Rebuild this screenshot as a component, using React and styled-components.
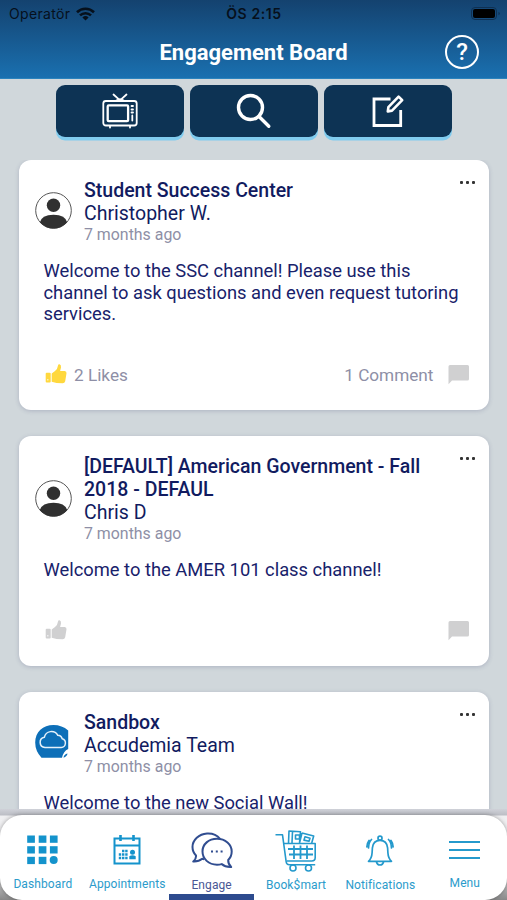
import * as React from 'react'
import styled, { createGlobalStyle } from 'styled-components'

const GlobalStyle = createGlobalStyle`
    * {
        box-sizing: border-box;
    }
    body {
        margin: 0;
        background: #d0d7db;
        font-family: Roboto, "Liberation Sans", sans-serif;
    }
    svg {
        display: block;
        flex-shrink: 0;
    }
`

const Screen = styled.div`
    width: 507px;
    height: 900px;
    display: flex;
    flex-direction: column;
    overflow: hidden;
    background: #d0d7db;
`

const Header = styled.header`
    height: 79px;
    flex-shrink: 0;
    background: linear-gradient(#14426f, #1a70b0);
    border-bottom: 1px solid #2b83bd;
`

const StatusBar = styled.div`
    display: grid;
    grid-template-columns: 1fr auto 1fr;
    align-items: center;
    height: 27px;
    padding: 0 6px 0 9px;
    color: #06101c;
    font-family: Inter, "Liberation Sans", sans-serif;
    font-size: 14px;
`

const Carrier = styled.div`
    display: flex;
    align-items: center;
    gap: 6px;
    letter-spacing: 0.35px;
`

const Clock = styled.div`
    font-weight: 600;
    letter-spacing: 0.6px;
    margin-right: 2px;
`

const Battery = styled.div`
    justify-self: end;
`

const TitleBar = styled.div`
    display: grid;
    grid-template-columns: 1fr auto 1fr;
    align-items: center;
    height: 50px;
    padding: 0 28px;
`

const Title = styled.h1`
    grid-column: 2;
    margin: 0;
    color: #fff;
    font-size: 22px;
    font-weight: 700;
`

const HelpButton = styled.button`
    justify-self: end;
    width: 34px;
    height: 34px;
    padding: 0;
    border: 2px solid #fff;
    border-radius: 50%;
    background: none;
    color: #fff;
    font-family: Roboto, sans-serif;
    font-size: 24px;
    font-weight: 500;
    line-height: 30px;
`

const Toolbar = styled.div`
    display: flex;
    justify-content: center;
    gap: 6px;
    padding: 6px 0 20px;
    flex-shrink: 0;
`

const ToolButton = styled.button`
    display: flex;
    align-items: center;
    justify-content: center;
    width: 128px;
    height: 52px;
    padding: 0;
    border: 0;
    border-radius: 9px;
    background: #0d3354;
    box-shadow: 0 3.5px 0 #80ccef;
    color: #fff;
    margin-bottom: 3px;
`

const Feed = styled.main`
    flex: 1;
    min-height: 0;
    overflow: hidden;
    padding: 0 18px 0 19px;
`

const Card = styled.article`
    height: ${props => props.$height}px;
    margin-bottom: 26px;
    padding: 19px 16px 0;
    border-radius: 12px;
    background: #fff;
    box-shadow: 0 1px 4px rgba(70, 75, 120, 0.25);
    display: flex;
    flex-direction: column;
`

const CardHead = styled.div`
    display: flex;
    align-items: center;
    gap: 12px;
`

const Avatar = styled.div`
    margin-bottom: 3px;
`

const Heading = styled.div`
    flex: 1;
    color: #111b60;
    font-size: 19.5px;
    line-height: 23px;
`

const Channel = styled.div`
    font-weight: 500;
    max-width: 345px;
`

const Time = styled.div`
    color: #8e8fa6;
    font-size: 15.9px;
    line-height: 20px;
`

const MoreButton = styled.button`
    display: flex;
    gap: 2.6px;
    align-self: flex-start;
    margin: 2px -2px 0 0;
    padding: 0;
    border: 0;
    background: none;
`

const Dot = styled.span`
    width: 3.2px;
    height: 3.2px;
    border-radius: 1px;
    background: #333;
`

const Message = styled.p`
    flex: 1;
    margin: 15px 0 0 8.5px;
    color: #18226b;
    font-size: 18.35px;
    line-height: 21.7px;
`

const CardFoot = styled.div`
    display: flex;
    justify-content: space-between;
    height: 28px;
    margin-bottom: 21px;
    padding: 0 3.5px 0 10px;
    color: #8e8fa6;
    font-size: 17.2px;
`

const Counter = styled.div`
    display: flex;
    align-items: center;
    gap: ${props => props.$gap}px;
`

const TabBarWrap = styled.footer`
    flex-shrink: 0;
    padding-top: 6px;
    background: linear-gradient(#cfd1d8, #bcbec5 6px, #efeff1 7px, #f1f1f3 60px, #888 91px);
`

const TabBar = styled.nav`
    display: grid;
    grid-template-columns: repeat(6, 84.4px);
    justify-content: end;
    height: 85px;
    border-radius: 22px;
    background: #fff;
    box-shadow: 0 0 4px rgba(0, 0, 0, 0.35);
`

const Tab = styled.a`
    display: flex;
    flex-direction: column;
    align-items: center;
    color: ${props => props.$active ? '#4a5795' : '#2b9bcb'};
    font-size: 12px;
    line-height: 16px;
    border-bottom: ${props => props.$active ? '6px solid #2d4b8e' : '0'};
`

const TabIcon = styled.div`
    height: ${props => props.$height}px;
    display: flex;
    align-items: center;
    padding-top: 9px;
`

const TabLabel = styled.span`
    letter-spacing: 0.1px;
    white-space: nowrap;
`

const WifiIcon = () => (
    <svg width="19" height="14" viewBox="0 0 19 14" fill="none" stroke="#06101c" strokeWidth="2.6">
        <path d="M1 5.2a12.2 12.2 0 0 1 17 0" />
        <path d="M4 8.4a8 8 0 0 1 11 0" />
        <path d="M9.5 13.6 6.4 10.5a4.5 4.5 0 0 1 6.2 0z" fill="#06101c" stroke="none" />
    </svg>
)

const BatteryIcon = () => (
    <svg width="30" height="13" viewBox="0 0 30 13">
        <rect x="0.5" y="0.5" width="25" height="12" rx="3.5" fill="none" stroke="#0f3052" />
        <rect x="2" y="2" width="22" height="9" rx="2" fill="#000" />
        <path d="M27.5 4.7v3.6q1.3-.5 1.3-1.8t-1.3-1.8z" fill="#0f3052" />
    </svg>
)

const TvIcon = () => (
    <svg width="36" height="36" viewBox="0 0 36 36" fill="none" stroke="#fff" strokeWidth="1.8" strokeLinecap="round">
        <path d="M11.5 1.5 18 7.3l6.5-5.8M14.5 7.5q3.5-2.8 7 0" />
        <rect x="1.3" y="8" width="33.4" height="24.5" rx="2.5" />
        <rect x="5.7" y="12.4" width="20.4" height="15.8" rx="1" strokeWidth="2.3" />
        <path d="M29.5 13h1.500M29.5 16.5h1.500M29.5 19.5h1.500M30.3 22.5v5M8 33v1.6M28 33v1.6" />
    </svg>
)

const SearchIcon = () => (
    <svg width="36" height="36" viewBox="0 0 36 36" fill="none" stroke="#fff" strokeWidth="3.4" strokeLinecap="round">
        <circle cx="14.5" cy="14.5" r="12" />
        <path d="m23 23.500 9.800 9.800" />
    </svg>
)

const ComposeIcon = () => (
    <svg width="34" height="34" viewBox="0 0 34 34" fill="none" stroke="#fff" strokeWidth="2.8">
        <path d="M19.5 5H3v26.500h26.700V16" />
        <path d="m16.8 17.400.6-4.300L27.600 2.600l3.600 3.600L21 16.600z" strokeWidth="2.600" strokeLinejoin="round" />
    </svg>
)

const PersonAvatar = () => (
    <svg width="37" height="37" viewBox="0 0 37 37">
        <clipPath id="avatar">
            <circle cx="18.5" cy="18.5" r="18" />
        </clipPath>
        <circle cx="18.5" cy="18.5" r="17.8" fill="#fff" stroke="#555" strokeWidth="1" />
        <circle cx="18.5" cy="13.2" r="6.7" fill="#303030" />
        <path d="M4.5 31q2-8.2 14-8.2T32.5 31L26 37H11z" fill="#303030" clipPath="url(#avatar)" />
    </svg>
)

const CloudAvatar = () => (
    <svg width="37" height="37" viewBox="0 0 37 37">
        <path d="M18.5 1Q27 1 33.2 6.500V25Q28.500 27 27 33.800H6.500Q.2 27 .2 18.500C.2 8 8 1 18.500 1z" fill="#0d6fb8" />
        <path d="M28.500 33.800q.5-3.500 4-4.200-.5 3-4 4.200z" fill="#0d6fb8" />
        <path d="M10 23.500a5.200 5.200 0 0 1-.6-10.300 7.200 7.200 0 0 1 13.300-2 4.900 4.900 0 0 1 4.500 3.500 4.500 4.500 0 0 1-1 8.800z" fill="none" stroke="#e6f1fa" strokeWidth="1.5" />
    </svg>
)

const LikeIcon = ({ color }) => (
    <svg width="22" height="22" viewBox="0 0 22 22" fill={color}>
        <rect x="0.7" y="8.700" width="5" height="9.800" rx="1" />
        <path d="M6.700 9.500 10 7.100q2.700-2.500 3-5.700Q13.200.1 14.500.3q1.800.5 1.500 3.200l-.9 3.600h4.600q2 .2 1.800 2.200l-1.300 8q-.5 1.900-2.600 1.900l-6-.2-4.900-1.200z" />
        <path d="M2 15h1.500v1.400H2z" fill="#fff" opacity="0.6" />
    </svg>
)

const CommentIcon = () => (
    <svg width="22" height="22" viewBox="0 0 22 22">
        <path d="M2 1h17.500q1.500 0 1.500 1.500V15q0 1.500-1.500 1.500H4L.5 20.300V2.500Q.5 1 2 1z" fill="#d0d0d1" />
    </svg>
)

const DashboardIcon = () => (
    <svg width="31" height="30" viewBox="0 0 31 30" fill="#1493cc">
        {[0, 11.5, 22.7].map(x => [0, 10.7, 21.3].map(y => (
            x > 20 && y > 20
                ? <circle key={`${x}-${y}`} cx="26.7" cy="25" r="4" />
                : <rect key={`${x}-${y}`} x={x + 0.2} y={y + 0.5} width="7.7" height="7.3" />
        )))}
    </svg>
)

const CalendarIcon = () => (
    <svg width="28" height="30" viewBox="0 0 28 30" fill="none" stroke="#1493cc" strokeWidth="2">
        <path d="M1.5 3.5h25v25h-25zM1.5 10.500h25" />
        <path d="M7.5 0v6M20.5 0v6" strokeWidth="2.6" />
        <path d="M9 16h6.400M5.800 19.500h9.600M5.800 23h9.600" strokeWidth="2.4" strokeDasharray="2.4 0.8" />
        <circle cx="19.5" cy="17.3" r="2.5" fill="#1493cc" stroke="none" />
        <path d="M16.3 24.3v-3q3.200-2.300 6.400 0v3z" fill="#1493cc" stroke="none" />
    </svg>
)

const ChatIcon = () => (
    <svg width="42" height="37" viewBox="0 0 42 37" fill="none" stroke="#304d90" strokeWidth="2" strokeLinejoin="round">
        <path d="M29 6.8C26 3 21 1.2 16 1.500 8 2 1.500 8 1.500 15c0 4 1.500 6.500 3.500 8.500.3 2.500-1 4.500-2.700 6 3.800.2 6.700-.8 8.900-2.700l2 .6" />
        <path d="M26 6.8c8.300 0 14.700 5.500 14.700 12.700 0 3.500-1.500 6.500-3.500 8.500-.2 3 .8 5 3 7-4 .2-7.200-.8-9.500-2.900-1.500.4-3 .6-4.700.6-8.300 0-14.500-5.800-14.500-13.200S17.700 6.800 26 6.800z" fill="#fff" />
        <path d="M20 19.500h2M24.800 19.500h2M29.600 19.500h2" />
    </svg>
)

const CartIcon = () => (
    <svg width="42" height="42" viewBox="0 0 42 42" fill="none" stroke="#2499cc" strokeWidth="1.6" strokeLinejoin="round">
        <path d="M.5 4.800h7L11.200 32q.4 2.700 3 2.700h26" />
        <path d="M8.700 13.500h31.500v14q0 3.500-3.500 3.500h-25" />
        <path d="m13.500 13 .5-12 11.500.8L24.500 13M17 13l.5-11.500M27 3l11.700 3-2 7M27 3l-2.500 10M20.500 5h4v4h-4z" />
        <path d="m30 6.800 5 1.500-1 3-5-1.200z" />
        <path d="M13 19h25M14 24.500h24M19 15.500V29M25.500 15.500V29M32 15.500V29" strokeWidth="1.8" />
        <circle cx="18" cy="38" r="3" />
        <circle cx="33.5" cy="38" r="3" />
    </svg>
)

const BellIcon = () => (
    <svg width="28" height="31" viewBox="0 0 28 31" fill="none" stroke="#2499cc" strokeWidth="1.7" strokeLinecap="round" strokeLinejoin="round">
        <path d="M2.500 26.300q3.300-3 3.600-8.500l.3-5Q7.200 5.300 14 5.300t7.600 7.500l.3 5q.3 5.500 3.600 8.500z" />
        <circle cx="14" cy="3.200" r="2" />
        <path d="M10.500 27q.7 3 3.500 3t3.500-3M5.500 4.500Q2.600 7.500 2.500 13M22.500 4.500Q25.400 7.500 25.500 13M3 5.500Q.8 8.500.9 12M25 5.500q2.200 3 2.100 6.500" />
    </svg>
)

const MenuIcon = () => (
    <svg width="31" height="20" viewBox="0 0 31 20" stroke="#2499cc" strokeWidth="1.8">
        <path d="M0 2h31M0 10h31M0 18h31" />
    </svg>
)

const Post = ({ channel, author, avatar, message, likes, comments, height }) => (
    <Card $height={height}>
        <CardHead>
            <Avatar>{avatar}</Avatar>
            <Heading>
                <Channel>{channel}</Channel>
                <div>{author}</div>
                <Time>7 months ago</Time>
            </Heading>
            <MoreButton aria-label="More">
                <Dot />
                <Dot />
                <Dot />
            </MoreButton>
        </CardHead>
        <Message>{message}</Message>
        <CardFoot>
            <Counter $gap={7}>
                <LikeIcon color={likes ? '#ffd83e' : '#d0d0d1'} />
                {likes}
            </Counter>
            <Counter $gap={14}>
                {comments}
                <CommentIcon />
            </Counter>
        </CardFoot>
    </Card>
)

const NavItem = ({ icon, text, active, height = 61 }) => (
    <Tab $active={active}>
        <TabIcon $height={height}>{icon}</TabIcon>
        <TabLabel>{text}</TabLabel>
    </Tab>
)

export default function App() {
    return (
        <Screen>
            <GlobalStyle />
            <Header>
                <StatusBar>
                    <Carrier>
                        Operatör
                        <WifiIcon />
                    </Carrier>
                    <Clock>ÖS 2:15</Clock>
                    <Battery>
                        <BatteryIcon />
                    </Battery>
                </StatusBar>
                <TitleBar>
                    <Title>Engagement Board</Title>
                    <HelpButton>?</HelpButton>
                </TitleBar>
            </Header>
            <Toolbar>
                <ToolButton aria-label="Channels">
                    <TvIcon />
                </ToolButton>
                <ToolButton aria-label="Search">
                    <SearchIcon />
                </ToolButton>
                <ToolButton aria-label="New post">
                    <ComposeIcon />
                </ToolButton>
            </Toolbar>
            <Feed>
                <Post
                    channel="Student Success Center"
                    author="Christopher W."
                    avatar={<PersonAvatar />}
                    message="Welcome to the SSC channel! Please use this channel to ask questions and even request tutoring services."
                    likes="2 Likes"
                    comments="1 Comment"
                    height={250}
                />
                <Post
                    channel="[DEFAULT] American Government - Fall 2018 - DEFAUL"
                    author="Chris D"
                    avatar={<PersonAvatar />}
                    message="Welcome to the AMER 101 class channel!"
                    height={230}
                />
                <Post
                    channel="Sandbox"
                    author="Accudemia Team"
                    avatar={<CloudAvatar />}
                    message="Welcome to the new Social Wall!"
                    height={230}
                />
            </Feed>
            <TabBarWrap>
                <TabBar>
                    <NavItem icon={<DashboardIcon />} text="Dashboard" />
                    <NavItem icon={<CalendarIcon />} text="Appointments" />
                    <NavItem icon={<ChatIcon />} text="Engage" active height={62} />
                    <NavItem icon={<CartIcon />} text="Book$mart" height={62} />
                    <NavItem icon={<BellIcon />} text="Notifications" height={62} />
                    <NavItem icon={<MenuIcon />} text="Menu" height={60} />
                </TabBar>
            </TabBarWrap>
        </Screen>
    )
}
